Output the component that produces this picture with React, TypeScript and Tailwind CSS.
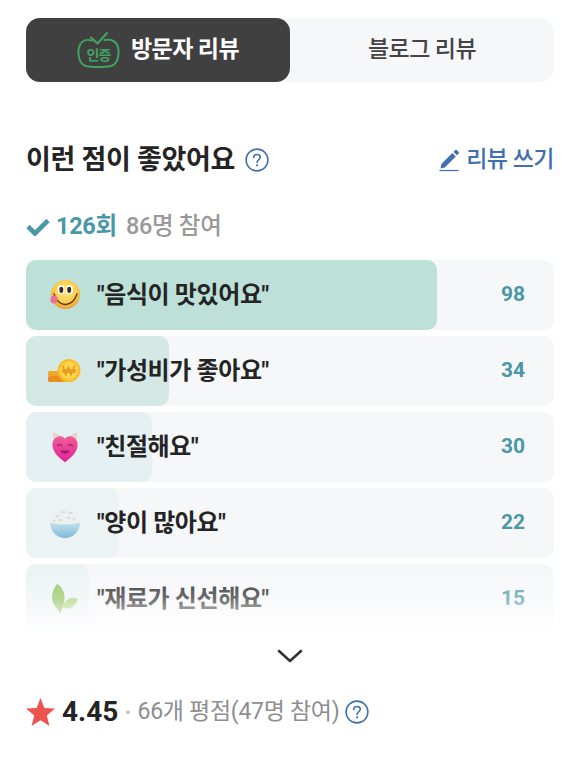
const FONT = "font-['Roboto','Noto_Sans_CJK_KR',sans-serif]";

function CertBadge() {
  return (
    <svg width="44" height="38" viewBox="0 0 44 38" fill="none" className="shrink-0">
      <path d="M15 9.500C10 8 5 9.500 2.800 14C0.500 19 1 27 4 31.500C6.500 35.500 11 36 21.500 36C32 36 36.500 35.500 39 31.500C42 27 42.500 19 40.200 14C38 9.500 33 8 27.500 9" stroke="#42a25e" strokeWidth="2" strokeLinecap="round" />
      <path d="M14 6.500L20.500 12.500L30 2" stroke="#42a25e" strokeWidth="2.200" strokeLinecap="round" strokeLinejoin="round" />
      <text x="21.500" y="28.500" textAnchor="middle" fontSize="14" fontWeight="700" fill="#42a25e" fontFamily="'Noto Sans CJK KR',sans-serif" letterSpacing="-0.8">인증</text>
    </svg>
  );
}

function Help() {
  return (
    <svg width="24" height="24" viewBox="0 0 26 26" fill="none" className="shrink-0">
      <circle cx="13" cy="13" r="11.800" stroke="#3f6fae" strokeWidth="1.700" />
      <path d="M9.400 10.400C9.400 8.300 11 7 13 7C15.100 7 16.600 8.300 16.600 10.100C16.600 12.600 13.100 12.900 13.100 15.600" stroke="#3f6fae" strokeWidth="1.700" strokeLinecap="round" />
      <circle cx="13.100" cy="18.800" r="1.200" fill="#3f6fae" />
    </svg>
  );
}

function Pencil() {
  return (
    <svg width="21" height="24" viewBox="0 0 22 24" fill="none" className="shrink-0">
      <path d="M2.500 16.200L14 4.700L17.600 8.300L6.100 19.800L1.600 20.800Z" fill="#3f6fae" />
      <path d="M15.200 3.500L17 1.700C17.500 1.200 18.200 1.200 18.700 1.700L20.600 3.600C21.100 4.100 21.100 4.800 20.600 5.300L18.800 7.100Z" fill="#3f6fae" />
      <path d="M0.500 23H20.500" stroke="#3f6fae" strokeWidth="1.300" />
    </svg>
  );
}

function Smile() {
  return (
    <svg width="32" height="32" viewBox="0 0 32 32">
      <defs>
        <radialGradient id="sm" cx="50%" cy="40%" r="60%">
          <stop offset="0%" stopColor="#ffe98a" />
          <stop offset="70%" stopColor="#fbc945" />
          <stop offset="100%" stopColor="#ee9c33" />
        </radialGradient>
      </defs>
      <circle cx="16.500" cy="15.500" r="14.500" fill="url(#sm)" />
      <ellipse cx="12" cy="10.500" rx="3.400" ry="4.600" fill="#fff" />
      <ellipse cx="20.500" cy="10.500" rx="3.400" ry="4.600" fill="#fff" />
      <ellipse cx="12.300" cy="10.800" rx="2" ry="3.100" fill="#3a2a22" />
      <ellipse cx="20.200" cy="10.800" rx="2" ry="3.100" fill="#3a2a22" />
      <path d="M5 15C7 22 12 26 17 25.500C22 25 26 21 28 15" fill="none" stroke="#5a3b1c" strokeWidth="1.400" strokeLinecap="round" />
      <ellipse cx="5" cy="20.500" rx="3.600" ry="4" fill="#ef6f9c" />
    </svg>
  );
}

function Coin() {
  return (
    <svg width="34" height="24" viewBox="0 0 34 24">
      <rect x="0" y="12" width="18" height="5" rx="1.500" fill="#f0a52a" />
      <rect x="0" y="17" width="18" height="6" rx="1.500" fill="#e88f1e" />
      <circle cx="21" cy="11.500" r="11.500" fill="#fbbf2d" />
      <circle cx="21" cy="11.500" r="9" fill="#ffd44c" />
      <path d="M15 7L17.700 16L20.400 8L23.100 16L26.500 7M14.500 11H27.500M14.500 13H27.500" fill="none" stroke="#e2971d" strokeWidth="1.400" strokeLinecap="round" strokeLinejoin="round" />
    </svg>
  );
}

function Heart() {
  return (
    <svg width="28" height="33" viewBox="0 0 32 38">
      <defs>
        <linearGradient id="ht" x1="0" y1="0" x2="0" y2="1">
          <stop offset="0%" stopColor="#f25f97" />
          <stop offset="100%" stopColor="#e0229a" />
        </linearGradient>
      </defs>
      <path d="M4 11L3 2.500L11 7M28 11L29 2.500L21 7" fill="#f8dcd6" stroke="#e5b5ae" strokeWidth="1" />
      <path d="M16 36C8 30 1.500 24 1.500 15.500C1.500 9.500 6 6 10.500 6C13 6 15 7 16 9C17 7 19 6 21.500 6C26 6 30.500 9.500 30.500 15.500C30.500 24 24 30 16 36Z" fill="url(#ht)" />
      <path d="M7.500 17C8.500 15 11 15 12 17M20 17C21 15 23.500 15 24.500 17" fill="none" stroke="#8c1160" strokeWidth="1.300" strokeLinecap="round" />
      <path d="M10.500 22.500C12 27.500 20 27.500 21.500 22.500Z" fill="#a81a72" />
    </svg>
  );
}

function Rice() {
  return (
    <svg width="32" height="32" viewBox="0 0 32 32">
      <defs>
        <linearGradient id="bw" x1="0" y1="0" x2="0" y2="1">
          <stop offset="0%" stopColor="#c4e2f0" />
          <stop offset="100%" stopColor="#7fb9d8" />
        </linearGradient>
      </defs>
      <path d="M1.500 16C1.500 6 8 1 16 1C24 1 30.500 6 30.500 16Z" fill="#eef0f0" />
      <path d="M7 9h3M13 5h3M20 6h3M10 13h3M18 11h3M24 12h2M4 14h2" stroke="#d2d6d6" strokeWidth="1.500" strokeLinecap="round" />
      <path d="M1 15.500C10 18 22 18 31 15.500C31 23.500 25 29 21 30C19 31.500 13 31.500 11 30C7 29 1 23.500 1 15.500Z" fill="url(#bw)" />
    </svg>
  );
}

function Leaf() {
  return (
    <svg width="28" height="32" viewBox="0 0 28 32">
      <path d="M6 1C1 7 -1 17 4 23C6 25.500 8 27 9 31C11 26 14 20 13.500 13C13 8 10 3 6 1Z" fill="#8fc45e" />
      <path d="M27 16C21 13 14 16 11.500 24.500C17 27.500 24 24 27 16Z" fill="#a9d37a" />
    </svg>
  );
}

const ROWS = [
  { label: '"음식이 맛있어요"', n: 98, bar: 'bg-[#bde0d9]', w: 'w-[411px]', icon: <Smile /> },
  { label: '"가성비가 좋아요"', n: 34, bar: 'bg-[#d4e8e6]', w: 'w-[143px]', icon: <Coin /> },
  { label: '"친절해요"', n: 30, bar: 'bg-[#e5f0f2]', w: 'w-[126px]', icon: <Heart /> },
  { label: '"양이 많아요"', n: 22, bar: 'bg-[#ebf3f5]', w: 'w-[93px]', icon: <Rice /> },
  { label: '"재료가 신선해요"', n: 15, bar: 'bg-[#ebf3f5]', w: 'w-[63px]', icon: <Leaf /> },
];

export default function App() {
  return (
    <div className={`${FONT} w-[580px] h-[758px] bg-white px-[26px] pt-[18px] text-[#242424] overflow-hidden`}>
      <div className="flex h-16 rounded-[14px] bg-[#f6f7f9]">
        <div className="flex w-[264px] items-center justify-center gap-[10px] rounded-[14px] bg-[#404041] text-white">
          <CertBadge />
          <span className="text-[23px] font-bold tracking-[-0.6px]">방문자 리뷰</span>
        </div>
        <div className="flex flex-1 items-center justify-center text-[23px] font-medium tracking-[-0.6px] text-[#444444]">블로그 리뷰</div>
      </div>

      <div className="mt-[60px] flex h-9 items-center justify-between">
        <div className="flex items-center gap-[10px]">
          <h2 className="text-[27px] font-bold tracking-[-0.3px]">이런 점이 좋았어요</h2>
          <Help />
        </div>
        <div className="flex items-center gap-[6px] text-[23px] font-medium tracking-[-0.5px] text-[#3f6fae]">
          <Pencil />
          <span>리뷰 쓰기</span>
        </div>
      </div>

      <div className="mt-[33px] flex h-8 items-center text-[23.500px] tracking-[-0.3px]">
        <svg width="24" height="18" viewBox="0 0 24 18" fill="none" className="mr-[6px]">
          <path d="M2 8.500L9 15.500L22 2.500" stroke="#4a97a6" strokeWidth="4.600" />
        </svg>
        <span className="font-bold text-[#4a97a6]">126회</span>
        <span className="ml-[9px] font-medium text-[#999999]">86명 참여</span>
      </div>

      <div className="relative mt-[17px] flex flex-col gap-[6px]">
        {ROWS.map((r) => (
          <div key={r.n} className="relative flex h-[70px] items-center rounded-[10px] bg-[#f6f7f9]">
            <div className={`absolute inset-y-0 left-0 rounded-[10px] ${r.bar} ${r.w}`} />
            <div className="relative flex w-[71px] shrink-0 items-center justify-center pl-[6px]">{r.icon}</div>
            <span className="relative text-[24px] font-bold tracking-[-0.4px]">{r.label}</span>
            <span className="relative ml-auto pr-[29px] text-[21px] font-bold text-[#4a97a6]">{r.n}</span>
          </div>
        ))}
        <div className="absolute inset-x-0 bottom-0 h-[70px] bg-gradient-to-b from-white/0 via-white/35 to-white" />
      </div>

      <div className="mt-[7px] flex h-[30px] items-center justify-center">
        <svg width="26" height="16" viewBox="0 0 26 16" fill="none">
          <path d="M2 3L13 13L24 3" stroke="#333333" strokeWidth="2.600" strokeLinecap="round" strokeLinejoin="round" />
        </svg>
      </div>

      <div className="mt-[21px] flex h-10 items-center">
        <svg width="29" height="28" viewBox="0 0 30 29" className="shrink-0">
          <path d="M15 0L19 10.300L30 11L21.500 18L24.300 29L15 23L5.700 29L8.500 18L0 11L11 10.300Z" fill="#ee5350" />
        </svg>
        <span className="ml-[7px] text-[28px] font-bold">4.45</span>
        <span className="ml-[6px] text-[24px] leading-none font-bold text-[#c4c4c4]">·</span>
        <span className="ml-[6px] text-[23px] tracking-[-0.3px] text-[#8e8e8e]">66개 평점(47명 참여)</span>
        <span className="ml-[6px]"><Help /></span>
      </div>
    </div>
  );
}
